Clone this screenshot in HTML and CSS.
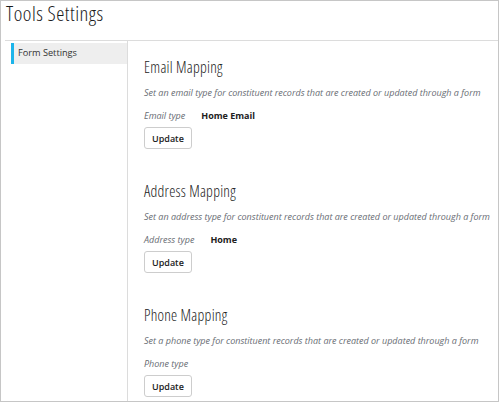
FILE: index.html
```html
<!DOCTYPE html>
<html>
<head>
<meta charset="utf-8">
<link rel="stylesheet" href="styles.css">
</head>
<body>
<div class="frame">
  <header class="page-header">
    <h1 class="page-title">Tools Settings</h1>
  </header>
  <div class="layout">
    <nav class="sidebar">
      <div class="nav-item active">Form Settings</div>
    </nav>
    <main class="content">
      <section class="mapping">
        <h2 class="mapping-title">Email Mapping</h2>
        <p class="mapping-desc">Set an email type for constituent records that are created or updated through a form</p>
        <div class="mapping-row"><span class="row-label">Email type</span><span class="row-value">Home Email</span></div>
        <button class="btn">Update</button>
      </section>
      <section class="mapping">
        <h2 class="mapping-title">Address Mapping</h2>
        <p class="mapping-desc">Set an address type for constituent records that are created or updated through a form</p>
        <div class="mapping-row"><span class="row-label">Address type</span><span class="row-value">Home</span></div>
        <button class="btn">Update</button>
      </section>
      <section class="mapping">
        <h2 class="mapping-title">Phone Mapping</h2>
        <p class="mapping-desc">Set a phone type for constituent records that are created or updated through a form</p>
        <div class="mapping-row"><span class="row-label">Phone type</span></div>
        <button class="btn">Update</button>
      </section>
    </main>
  </div>
</div>
</body>
</html>
```

FILE: styles.css
```css
html, body {
  margin: 0;
  padding: 0;
  background: #fff;
}
body {
  font-family: "Open Sans", "Liberation Sans", sans-serif;
  color: #212121;
}
.frame {
  width: 497px;
  height: 400px;
  border: 1px solid #c6c6c6;
  overflow: hidden;
  display: flex;
  flex-direction: column;
}
.page-header {
  flex-shrink: 0;
  margin-left: 4px;
  height: 39px;
  border-bottom: 1px solid #dcdcdc;
}
.page-title {
  margin: 0;
  padding: 0 0 0 1px;
  font-family: "Open Sans", "Liberation Sans", sans-serif;
  font-stretch: 75%;
  font-weight: 300;
  font-size: 20.5px;
  letter-spacing: 0.5px;
  line-height: 24px;
  color: #1a1a1a;
}
.layout {
  flex: 1;
  display: flex;
  margin-left: 4px;
}
.sidebar {
  flex-shrink: 0;
  width: 122px;
  border-right: 1px solid #dcdcdc;
  padding-top: 2px;
}
.nav-item {
  margin-left: 6px;
  height: 21px;
  line-height: 19px;
  background: #eeeeee;
  border-left: 3px solid #1cb4ea;
  padding-left: 4px;
  font-size: 9.2px;
  color: #333;
}
.content {
  flex: 1;
  padding: 16px 0 0 16px;
}
.mapping {
  margin-bottom: 32px;
}
.mapping-title {
  margin: 0 0 9px;
  font-family: "Open Sans", "Liberation Sans", sans-serif;
  font-stretch: 75%;
  font-weight: 300;
  font-size: 15.5px;
  letter-spacing: 0.25px;
  line-height: 20px;
  color: #222;
}
.mapping-desc {
  margin: 0 0 9px;
  font-size: 9px;
  line-height: 14px;
  font-style: italic;
  color: #686c73;
  white-space: nowrap;
}
.mapping-row {
  display: flex;
  gap: 16px;
  font-size: 9px;
  line-height: 14px;
  margin-bottom: 4px;
}
.row-label {
  font-style: italic;
  color: #686c73;
}
.row-value {
  font-weight: bold;
  color: #212121;
}
.btn {
  display: block;
  height: 22px;
  padding: 0 7px;
  border: 1px solid #cdcdcd;
  border-radius: 3px;
  background: #fff;
  font-family: "Open Sans", "Liberation Sans", sans-serif;
  font-size: 9px;
  font-weight: 600;
  color: #212121;
}
```
